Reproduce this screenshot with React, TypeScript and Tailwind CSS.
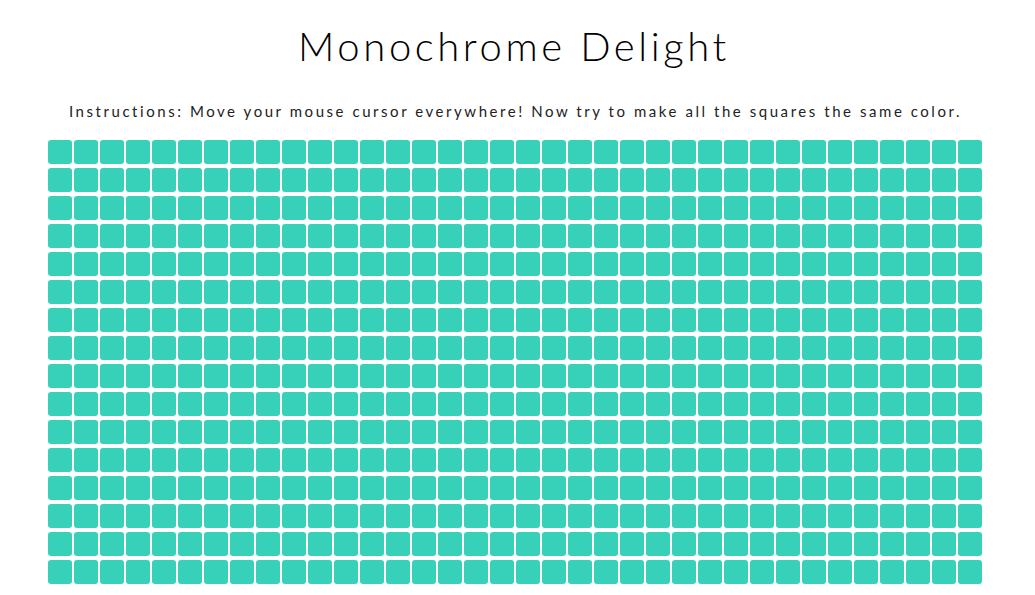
import React from "react";

const COLS = 36;
const ROWS = 16;

const App = () => {
  const tiles = Array.from({ length: COLS * ROWS }, (_, i) => i);

  return (
    <div className="min-h-screen bg-white font-['Lato',sans-serif] text-black">
      <h1 className="pr-[7px] pt-[24px] text-center text-[40px] font-light leading-[44px] tracking-[3.6px]">
        Monochrome Delight
      </h1>
      <p className="mt-[33px] pr-[4px] text-center text-[15px] font-normal leading-[20px] tracking-[2.55px] text-[#222]">
        Instructions: Move your mouse cursor everywhere! Now try to make all the
        squares the same color.
      </p>
      <div className="ml-[48px] mt-[19px] grid w-max grid-cols-[repeat(36,24px)] gap-x-[2px] gap-y-[4px]">
        {tiles.map((i) => (
          <div key={i} className="h-[24px] w-[24px] rounded-[3px] bg-[#37d1ba]" />
        ))}
      </div>
    </div>
  );
};

export default App;
